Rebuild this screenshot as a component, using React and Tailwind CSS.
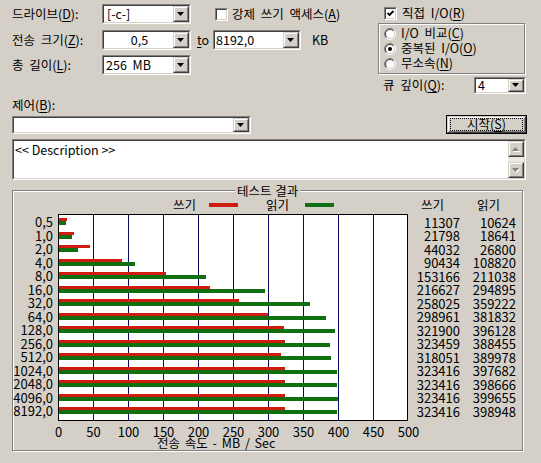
import React from 'react';

const sizes = ['0,5','1,0','2,0','4,0','8,0','16,0','32,0','64,0','128,0','256,0','512,0','1024,0','2048,0','4096,0','8192,0'];
const writes = [11307,21798,44032,90434,153166,216627,258025,298961,321900,323459,318051,323416,323416,323416,323416];
const reads = [10624,18641,26800,108820,211038,294895,359222,381832,396128,388455,389978,397682,398666,399655,398948];

const NUM_FONT = '"Liberation Sans Narrow", "Noto Sans CJK KR", sans-serif';
const KR_FONT = '"Noto Sans CJK KR", sans-serif';

function U({ children }) {
  return <span className="underline underline-offset-[2px] decoration-1">{children}</span>;
}

function Sunken({ className = '', innerClass = '', children }) {
  return (
    <div className={`border border-t-[#808080] border-l-[#808080] border-r-white border-b-white ${className}`}>
      <div className={`h-full w-full border border-t-[#404040] border-l-[#404040] border-r-[#d4d0c8] border-b-[#d4d0c8] ${innerClass}`}>
        {children}
      </div>
    </div>
  );
}

function Raised({ className = '', children }) {
  return (
    <div className={`border border-t-[#d4d0c8] border-l-[#d4d0c8] border-r-[#404040] border-b-[#404040] bg-[#d4d0c8] ${className}`}>
      <div className="h-full w-full border border-t-white border-l-white border-r-[#808080] border-b-[#808080] flex items-center justify-center">
        {children}
      </div>
    </div>
  );
}

function Arrow({ dir = 'down', color = '#000', shadow = false }) {
  const pts = dir === 'down' ? '0,0 7,0 3.5,4' : '0,4 7,4 3.5,0';
  return (
    <svg width="8" height="5" viewBox="0 0 8 5" className="block">
      {shadow && <polygon points={pts} transform="translate(1,1)" fill="#fff" />}
      <polygon points={pts} fill={color} />
    </svg>
  );
}

function Combo({ className = '', text = '', textClass = '' }) {
  return (
    <Sunken className={className} innerClass="bg-white flex items-stretch">
      <div className={`flex-1 flex items-center whitespace-pre ${textClass}`}>{text}</div>
      <Raised className="w-[16px]"><Arrow /></Raised>
    </Sunken>
  );
}

function Checkbox({ checked }) {
  return (
    <Sunken className="w-[13px] h-[13px] shrink-0" innerClass="bg-white">
      {checked && (
        <svg width="9" height="9" viewBox="0 0 9 9" className="block">
          <polyline points="1.5,4 3.5,6 7.5,2" fill="none" stroke="#000" strokeWidth="1.8" />
        </svg>
      )}
    </Sunken>
  );
}

function Radio({ checked }) {
  return (
    <svg width="12" height="12" viewBox="0 0 12 12" className="block shrink-0">
      <circle cx="6" cy="6" r="4.5" fill="#fff" />
      <path d="M 9.9 2.1 A 5.5 5.5 0 0 0 2.1 9.9" fill="none" stroke="#808080" strokeWidth="1" />
      <path d="M 2.1 9.9 A 5.5 5.5 0 0 0 9.9 2.1" fill="none" stroke="#fff" strokeWidth="1" />
      <path d="M 9.2 2.8 A 4.5 4.5 0 0 0 2.8 9.2" fill="none" stroke="#404040" strokeWidth="1" />
      <path d="M 2.8 9.2 A 4.5 4.5 0 0 0 9.2 2.8" fill="none" stroke="#d4d0c8" strokeWidth="1" />
      {checked && <circle cx="6" cy="6" r="2" fill="#000" />}
    </svg>
  );
}

function Chart() {
  const x0 = 58.5;
  const sc = 0.698;
  return (
    <svg width="509" height="259" viewBox="13 191 509 259" overflow="visible" className="block [word-spacing:2px]">
      <text x="173" y="204.5" dominantBaseline="central" fontSize="12.5" fontFamily={KR_FONT}>쓰기</text>
      <rect x="209" y="203" width="29" height="4" fill="#d01c10" />
      <text x="266" y="204.5" dominantBaseline="central" fontSize="12.5" fontFamily={KR_FONT}>읽기</text>
      <rect x="305" y="203" width="29" height="4" fill="#107010" />
      <text x="421" y="204.5" dominantBaseline="central" fontSize="12.5" fontFamily={KR_FONT}>쓰기</text>
      <text x="477" y="204.5" dominantBaseline="central" fontSize="12.5" fontFamily={KR_FONT}>읽기</text>

      <g shapeRendering="crispEdges">
        <rect x="58.5" y="214.5" width="349" height="206" fill="#fff" stroke="#000" />
        {[1,2,3,4,5,6,7,8,9].map(k => (
          <line key={k} x1={x0 + 35 * k} x2={x0 + 35 * k} y1="214.5" y2="420.5" stroke="#0a0a5e" />
        ))}
        {writes.map((w, i) => {
          const y = 218 + Math.round(13.5 * i);
          return (
            <g key={i}>
              <rect x="59" y={y} width={(w / 1000) * sc} height="3" fill="#d01c10" />
              <rect x="59" y={y + 3} width={(reads[i] / 1000) * sc} height="4" fill="#107010" />
            </g>
          );
        })}
      </g>

      {sizes.map((s, i) => (
        <text key={s} x="53" y={221.5 + 13.5 * i} textAnchor="end" dominantBaseline="central" fontSize="13" fontFamily={NUM_FONT}>{s}</text>
      ))}
      {writes.map((w, i) => (
        <text key={'w' + i} x="460" y={222 + 13.5 * i} textAnchor="end" dominantBaseline="central" fontSize="13" fontFamily={NUM_FONT}>{w}</text>
      ))}
      {reads.map((r, i) => (
        <text key={'r' + i} x="516" y={222 + 13.5 * i} textAnchor="end" dominantBaseline="central" fontSize="13" fontFamily={NUM_FONT}>{r}</text>
      ))}
      {[0,50,100,150,200,250,300,350,400,450,500].map((t, k) => (
        <text key={t} x={x0 + 35 * k} y="431" textAnchor="middle" dominantBaseline="central" fontSize="13" fontFamily={NUM_FONT}>{t}</text>
      ))}
      <text x="157" y="442.5" dominantBaseline="central" fontSize="12.5" fontFamily={KR_FONT}>전송 속도 - MB / Sec</text>
    </svg>
  );
}

export default function App() {
  return (
    <div className="w-[541px] h-[463px] bg-[#d4d0c8] text-black text-[12.5px] leading-none overflow-hidden font-['Noto_Sans_CJK_KR',sans-serif] [word-spacing:3px]">
      <div className="pl-[12px]">
        <div className="flex pt-[4px]">
          <div className="w-[366px] flex flex-col">
            <div className="flex items-center h-[20px]">
              <span className="w-[90px]">드라이브(<U>D</U>):</span>
              <Combo className="w-[89px] h-[20px]" text="[-c-]" textClass="pl-[3px]" />
              <div className="ml-[24px]"><Checkbox /></div>
              <span className="ml-[4px]">강제 쓰기 액세스(<U>A</U>)</span>
            </div>
            <div className="flex items-center h-[20px] mt-[6px]">
              <span className="w-[90px]">전송 크기(<U>Z</U>):</span>
              <Combo className="w-[89px] h-[20px]" text="0,5" textClass="justify-center pl-[2px]" />
              <span className="w-[22px] pl-[6px]"><U>t</U>o</span>
              <Combo className="w-[88px] h-[20px]" text="8192,0" textClass="pl-[1px]" />
              <span className="ml-[11px]">KB</span>
            </div>
            <div className="flex items-center h-[20px] mt-[5px]">
              <span className="w-[90px]">총 길이(<U>L</U>):</span>
              <Combo className="w-[89px] h-[20px]" text="256 MB" textClass="pl-[2px]" />
            </div>
          </div>
          <div className="w-[148px] flex flex-col">
            <div className="h-[19px] flex items-center pl-[6px]">
              <Checkbox checked />
              <span className="ml-[5px]">직접 I/O(<U>R</U>)</span>
            </div>
            <div className="w-[147px] h-[51px] border border-[#808080] shadow-[inset_1px_1px_0_#fff,1px_1px_0_#fff] pl-[5px] pt-[2px] flex flex-col">
              <div className="h-[15px] flex items-center"><Radio /><span className="ml-[5px]">I/O 비교(<U>C</U>)</span></div>
              <div className="h-[15px] flex items-center"><Radio checked /><span className="ml-[5px]">중복된 I/O(<U>O</U>)</span></div>
              <div className="h-[15px] flex items-center"><Radio /><span className="ml-[5px]">무소속(<U>N</U>)</span></div>
            </div>
            <div className="mt-[3px] h-[17px] flex items-center">
              <span className="pl-[5px]">큐 깊이(<U>Q</U>):</span>
              <Combo className="ml-auto w-[52px] h-[17px]" text="4" textClass="pl-[2px]" />
            </div>
          </div>
        </div>

        <div className="mt-[4px] h-[14px] flex items-center">제어(<U>B</U>):</div>

        <div className="mt-[3px] h-[19px] flex items-start w-[515px]">
          <Combo className="mt-[1px] w-[239px] h-[18px]" text="" />
          <div className="ml-auto w-[81px] h-[19px] border border-black">
            <Raised className="h-full w-full">
              <div className="w-[73px] h-[13px] border border-dotted border-black flex items-center justify-center">
                시작(<U>S</U>)
              </div>
            </Raised>
          </div>
        </div>

        <Sunken className="mt-[5px] w-[514px] h-[41px]" innerClass="bg-white flex">
          <div className="flex-1 pl-[1px] pt-[3px] whitespace-pre [word-spacing:0px]">{'<< Description >>'}</div>
          <div className="w-[16px] flex flex-col">
            <Raised className="h-[16px] w-[16px]"><Arrow dir="up" color="#808080" shadow /></Raised>
            <div className="flex-1 bg-[#ece9e2]" />
            <Raised className="h-[16px] w-[16px]"><Arrow dir="down" color="#808080" shadow /></Raised>
          </div>
        </Sunken>

        <div className="mt-[10px] relative w-[511px] h-[261px] border border-[#808080] shadow-[inset_1px_1px_0_#fff,1px_1px_0_#fff]">
          <span className="absolute left-[222px] -top-[7px] px-[2px] bg-[#d4d0c8] leading-[13px] [word-spacing:1px]">테스트 결과</span>
          <Chart />
        </div>
      </div>
    </div>
  );
}
